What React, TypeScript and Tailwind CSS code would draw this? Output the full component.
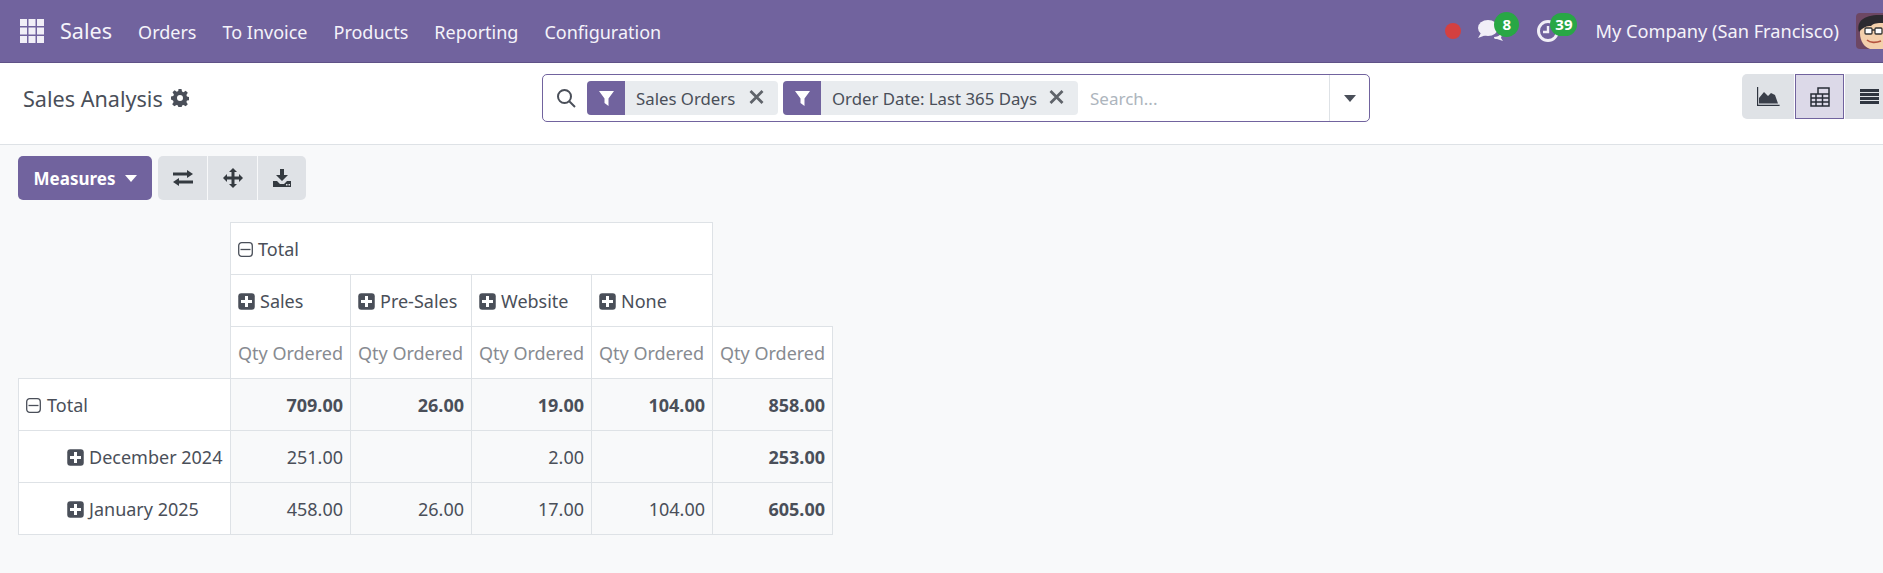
import React from "react";

function Plus() {
  return (
    <svg width="17" height="17" viewBox="0 0 17 17" className="shrink-0">
      <rect x="0.25" y="0.25" width="16.5" height="16.5" rx="3" fill="#4a4f59" />
      <path d="M7 3h3v4h4v3h-4v4H7v-4H3V7h4z" fill="#fff" />
    </svg>
  );
}

function Minus() {
  return (
    <svg width="15" height="15" viewBox="0 0 15 15" className="shrink-0">
      <rect x="0.7" y="0.7" width="13.600" height="13.600" rx="3" fill="none" stroke="#4a4f59" strokeWidth="1.3" />
      <path d="M2.500 7.500h10" stroke="#4a4f59" strokeWidth="1.3" />
    </svg>
  );
}

function Funnel() {
  return (
    <svg width="15" height="17" viewBox="0 0 15 17">
      <path d="M0 1h15L9.500 8.500V16L5.500 13V8.500z" fill="#fff" />
    </svg>
  );
}

function Facet({ label, w }: { label: string; w: string }) {
  return (
    <div className={`flex h-[34px] items-stretch overflow-hidden rounded-[4px] bg-[#e9ecef] ${w}`}>
      <div className="flex w-[38px] shrink-0 items-center justify-center bg-[#71639e]"><Funnel /></div>
      <span className="flex-1 whitespace-nowrap pl-[11px] pt-[1px] text-[16.8px] leading-[34px] text-[#4a4f59]">{label}</span>
      <svg width="15" height="14" viewBox="0 0 15 14" className="mr-[14px] mt-[9px] shrink-0">
        <path d="M1.500 1l12 12M13.500 1l-12 12" stroke="#5f636a" strokeWidth="2.800" />
      </svg>
    </div>
  );
}

function Cell({ children, bold }: { children?: React.ReactNode; bold?: boolean }) {
  return (
    <td className={`h-[52px] border border-[#dee2e6] bg-[#f8f9fa] px-[7px] pt-[2px] text-right text-[#4a4f59] ${bold ? "font-bold" : ""}`}>
      {children}
    </td>
  );
}

const cols = ["w-[120px]", "w-[121px]", "w-[120px]", "w-[121px]", "w-[120px]"];

export default function App() {
  return (
    <div className="flex h-[573px] flex-col overflow-hidden bg-[#f8f9fa] text-[18px] text-[#4a4f59] [font-family:'Noto_Sans',sans-serif]">
      <header className="flex h-[63px] shrink-0 items-center border-b border-[#5f5287] bg-[#71639e] text-[#f5f3fa]">
        <svg width="24" height="24" viewBox="0 0 24 24" className="ml-[20px] mr-[16px]" fill="#f1eff7">
          {[0, 8.5, 17].flatMap((x) => [0, 8.5, 17].map((y) => <rect key={`${x}-${y}`} x={x} y={y} width="7" height="7" />))}
        </svg>
        <span className="mr-[26px] pt-[1px] text-[21.6px]">Sales</span>
        <nav className="flex gap-[26px] pt-[2px]">
          <span>Orders</span><span>To Invoice</span><span>Products</span><span>Reporting</span><span>Configuration</span>
        </nav>
        <div className="ml-auto flex items-center">
          <span className="mr-[17px] h-[16px] w-[16px] rounded-full bg-[#d44040]" />
          <div className="relative mr-[33px] h-[22px] w-[26px]">
            <svg width="26" height="22" viewBox="0 0 26 22" fill="#f1eff7">
              <ellipse cx="10" cy="8" rx="10" ry="8" />
              <path d="M3 13l-3 5 8-3z" />
              <path d="M16 17c3 0 5-1 7-3l1 1c0 1-1 2-1 3l2 3-6-2c-2 0-3 0-3-2z" />
            </svg>
            <span className="absolute left-[16px] top-[-8px] flex h-[25px] w-[25px] items-center justify-center rounded-full bg-[#28a745] text-[15px] font-bold text-white">8</span>
          </div>
          <div className="relative mr-[36px] h-[24px] w-[22px]">
            <svg width="24" height="24" viewBox="0 0 24 24" fill="none" stroke="#f1eff7" strokeWidth="3">
              <circle cx="11" cy="12" r="9.500" />
              <path d="M11 7v6H6" strokeWidth="2.400" />
            </svg>
            <span className="absolute left-[13px] top-[-6px] flex h-[23px] w-[27px] items-center justify-center rounded-full bg-[#28a745] text-[15px] font-bold text-white">39</span>
          </div>
          <span className="mr-[17px] pt-[2px] text-[18.2px]">My Company (San Francisco)</span>
          <svg width="27" height="36" viewBox="0 0 27 36" className="overflow-hidden rounded-l-[4px]">
            <rect width="27" height="36" fill="#6d4763" />
            <path d="M4 20c0-9 4-13 23-13v29H14C8 34 4 28 4 20z" fill="#f4d0ac" />
            <path d="M3 19C0 8 8 1 27 2v8c-6 0-9 0-12 3-4 0-8 1-12 6z" fill="#2c2a30" />
            <rect x="9" y="15" width="7" height="6" rx="1" fill="#fff" stroke="#333" strokeWidth="1.300" />
            <rect x="19" y="15" width="7" height="6" rx="1" fill="#fff" stroke="#333" strokeWidth="1.300" />
            <path d="M16 17h3" stroke="#333" strokeWidth="1.300" />
            <path d="M11 27c3 3 9 3 14 1" stroke="#b5543f" strokeWidth="1.600" fill="none" />
          </svg>
        </div>
      </header>

      <div className="flex h-[82px] shrink-0 items-start border-b border-[#dee2e6] bg-white pl-[23px] pt-[11px]">
        <div className="flex h-[48px] w-[519px] items-center gap-[8px]">
          <span className="pt-[2px] text-[21.6px] text-[#4a4f59]">Sales Analysis</span>
          <svg width="18" height="18" viewBox="0 0 24 24" fill="#4a4f59">
            <path fillRule="evenodd" d="M10 0h4l.7 3.400 2 .8 2.900-1.900 2.800 2.800-1.900 2.900.8 2 3.400.7v4l-3.400.7-.8 2 1.900 2.900-2.800 2.800-2.900-1.900-2 .8-.7 3.400h-4l-.7-3.400-2-.8-2.900 1.900-2.800-2.800 1.900-2.900-.8-2L-.3 14v-4l3.400-.7.8-2L2 4.400l2.800-2.800 2.900 1.900 2-.8zM12 8a4 4 0 100 8 4 4 0 000-8z" />
          </svg>
        </div>
        <div className="flex h-[48px] w-[828px] items-center rounded-[5px] border border-[#71639e] bg-white">
          <svg width="20" height="20" viewBox="0 0 20 20" className="ml-[13px] mr-[11px] shrink-0" fill="none" stroke="#4a4f59" strokeWidth="2">
            <circle cx="8.500" cy="8.500" r="6.500" /><path d="M13 13l6 6" />
          </svg>
          <div className="flex gap-[5px]">
            <Facet label="Sales Orders" w="w-[191px]" />
            <Facet label="Order Date: Last 365 Days" w="w-[295px]" />
          </div>
          <span className="ml-[12px] flex-1 pt-[2px] text-[17px] text-[#adb5bd]">Search...</span>
          <div className="flex h-full w-[40px] items-center justify-center border-l border-[#dee2e6]">
            <span className="h-0 w-0 border-x-[6px] border-t-[7px] border-x-transparent border-t-[#4a4f59]" />
          </div>
        </div>
        <div className="ml-auto flex h-[45px] w-[141px] gap-[1px] overflow-hidden rounded-l-[5px]">
          <div className="flex w-[52px] items-center justify-center bg-[#dfe2e6]">
            <svg width="23" height="19" viewBox="0 0 23 19"><path d="M.6 0v18.400h22" stroke="#2f3540" strokeWidth="1.200" fill="none" /><path d="M2 16.500V11l5-6 4 4 3-3 4 2 3 8.500z" fill="#3a3f4a" /></svg>
          </div>
          <div className="flex w-[49px] items-center justify-center border border-[#71639e] bg-[#dcd9e8]">
            <svg width="20" height="20" viewBox="0 0 20 20" fill="none" stroke="#272c36" strokeWidth="1.500">
              <path d="M1 7h18v12H1zM1 11h18M1 15h18M6 7v12M12.500 7v12M8 7V1h11v6" />
            </svg>
          </div>
          <div className="flex flex-1 items-center bg-[#dfe2e6] pl-[15px]">
            <svg width="19" height="15" viewBox="0 0 19 15" fill="#2f3540">
              <rect width="19" height="3" /><rect y="4" width="19" height="3" /><rect y="8" width="19" height="3" /><rect y="12" width="19" height="3" />
            </svg>
          </div>
        </div>
      </div>

      <div className="flex items-stretch gap-[6px] pl-[18px] pt-[11px]">
        <button className="flex h-[44px] w-[134px] items-center justify-center gap-[10px] rounded-[5px] bg-[#71639e] pl-[1px] text-[17px] font-bold text-white">
          <span className="pt-[2px]">Measures</span>
          <span className="h-0 w-0 border-x-[6px] border-t-[7px] border-x-transparent border-t-white" />
        </button>
        <div className="flex h-[44px] w-[148px] overflow-hidden rounded-[5px] bg-[#dfe2e6] [&>div]:flex [&>div]:items-center [&>div]:justify-center">
          <div className="w-[50px] border-r border-[#f8f9fa]">
            <svg width="20" height="16" viewBox="0 0 20 16" fill="#343a40"><path d="M0 2.500h14V0l6 4-6 4V5.500H0zM20 10.500H6V8l-6 4 6 4v-2.500h14z" /></svg>
          </div>
          <div className="w-[50px] border-r border-[#f8f9fa]">
            <svg width="20" height="20" viewBox="0 0 20 20" fill="#343a40"><path d="M10 0l4 4h-2.500v4.500H16V6l4 4-4 4v-2.500h-4.500V16H14l-4 4-4-4h2.500v-4.500H4V14l-4-4 4-4v2.500h4.500V4H6z" /></svg>
          </div>
          <div className="flex-1">
            <svg width="18" height="18" viewBox="0 0 18 18" fill="#343a40"><path fillRule="evenodd" d="M7 0h4v6h4l-6 6-6-6h4zM0 12h4l3 3h4l3-3h4v6H0zM13 15v1.500h1.500V15zM15.500 15v1.500H17V15z" /></svg>
          </div>
        </div>
      </div>

      <div className="pl-[18px] pt-[22px]">
        <table className="w-[814px] table-fixed border-collapse">
          <colgroup>
            <col className="w-[212px]" />
            {cols.map((c, i) => <col key={i} className={c} />)}
          </colgroup>
          <tbody>
            <tr className="h-[52px]">
              <td />
              <td colSpan={4} className="border border-[#dee2e6] bg-white px-[7px] pt-[2px]">
                <span className="flex items-center gap-[5px]"><Minus />Total</span>
              </td>
              <td />
            </tr>
            <tr className="h-[52px]">
              <td />
              {["Sales", "Pre-Sales", "Website", "None"].map((l) => (
                <td key={l} className="border border-[#dee2e6] bg-white px-[7px] pt-[2px]">
                  <span className="flex items-center gap-[5px] whitespace-nowrap"><Plus />{l}</span>
                </td>
              ))}
              <td />
            </tr>
            <tr className="h-[52px]">
              <td />
              {cols.map((c, i) => (
                <td key={i} className="whitespace-nowrap border border-[#dee2e6] bg-white px-[7px] pt-[2px] text-[#878b91]">Qty Ordered</td>
              ))}
            </tr>
            <tr className="h-[52px]">
              <td className="border border-[#dee2e6] bg-white px-[7px] pt-[2px]">
                <span className="flex items-center gap-[6px]"><Minus />Total</span>
              </td>
              {["709.00", "26.00", "19.00", "104.00", "858.00"].map((v) => <Cell key={v} bold>{v}</Cell>)}
            </tr>
            <tr className="h-[52px]">
              <td className="border border-[#dee2e6] bg-white pl-[48px] pt-[2px]">
                <span className="flex items-center gap-[5px] whitespace-nowrap"><Plus />December 2024</span>
              </td>
              <Cell>251.00</Cell><Cell /><Cell>2.00</Cell><Cell /><Cell bold>253.00</Cell>
            </tr>
            <tr className="h-[52px]">
              <td className="border border-[#dee2e6] bg-white pl-[48px] pt-[2px]">
                <span className="flex items-center gap-[5px] whitespace-nowrap"><Plus />January 2025</span>
              </td>
              <Cell>458.00</Cell><Cell>26.00</Cell><Cell>17.00</Cell><Cell>104.00</Cell><Cell bold>605.00</Cell>
            </tr>
          </tbody>
        </table>
      </div>
    </div>
  );
}
